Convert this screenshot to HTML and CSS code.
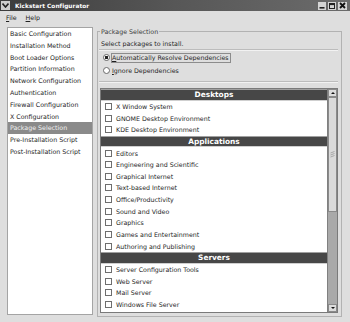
FILE: index.html
```html
<!DOCTYPE html>
<html lang="en">
<head>
  <meta charset="UTF-8" />
  <title>Kickstart Configurator</title>
  <link rel="stylesheet" href="styles.css">
</head>
<body>
  <div class="window">
    <div class="titlebar">
      <span class="tb-menu">
        <svg width="7" height="5" viewBox="0 0 7 5"><path d="M0.5 0.5 L3.5 4 L6.5 0.5" fill="none" stroke="#222" stroke-width="1.6"/></svg>
      </span>
      <span class="title">Kickstart Configurator</span>
      <span class="tb-btns">
        <span class="tb-btn"><svg width="6" height="6" viewBox="0 0 6 6"><rect x="0.5" y="4" width="5" height="1.6" fill="#222"/></svg></span>
        <span class="tb-btn"><svg width="6" height="6" viewBox="0 0 6 6"><rect x="0.5" y="0.5" width="5" height="5" fill="none" stroke="#222" stroke-width="1"/><rect x="0.5" y="0.5" width="5" height="1.6" fill="#222"/></svg></span>
        <span class="tb-btn close"><svg width="7" height="7" viewBox="0 0 7 7"><path d="M1 1 L6 6 M6 1 L1 6" stroke="#111" stroke-width="1.8"/></svg></span>
      </span>
    </div>

    <div class="menubar">
      <span><u>F</u>ile</span>
      <span><u>H</u>elp</span>
    </div>

    <div class="main">
      <ul class="sidebar">
        <li>Basic Configuration</li>
        <li>Installation Method</li>
        <li>Boot Loader Options</li>
        <li>Partition Information</li>
        <li>Network Configuration</li>
        <li>Authentication</li>
        <li>Firewall Configuration</li>
        <li>X Configuration</li>
        <li class="active">Package Selection</li>
        <li>Pre-Installation Script</li>
        <li>Post-Installation Script</li>
      </ul>

      <fieldset class="frame">
        <legend>Package Selection</legend>
        <div class="intro">Select packages to install.</div>
        <div class="sep"></div>
        <div class="radio on"><span class="dot"></span><span class="focus"><u>A</u>utomatically Resolve Dependencies</span></div>
        <div class="radio"><span class="dot"></span><span class="plain"><u>I</u>gnore Dependencies</span></div>
        <div class="sep lower"></div>

        <div class="pkgbox">
          <div class="pkglist" id="pkgList">
            <!-- rows are added by the script below -->
          </div>
          <div class="scrollbar">
            <div class="sb-btn"><span class="arrow up"></span></div>
            <div class="sb-thumb">
              <svg width="5" height="7" viewBox="0 0 5 7"><path d="M0.5 2 L4.5 0.5 M0.5 4 L4.5 2.5 M0.5 6 L4.5 4.5" stroke="#9a9a9a" stroke-width="0.8"/></svg>
            </div>
            <div class="sb-trough"></div>
            <div class="sb-btn"><span class="arrow down"></span></div>
          </div>
        </div>
      </fieldset>
    </div>
  </div>

<script>
  // package groups shown in the list (last entry is scrolled just out of view)
  const groups = [
    {name: "Desktops", items: ["X Window System", "GNOME Desktop Environment", "KDE Desktop Environment"]},
    {name: "Applications", items: ["Editors", "Engineering and Scientific", "Graphical Internet",
      "Text-based Internet", "Office/Productivity", "Sound and Video", "Graphics",
      "Games and Entertainment", "Authoring and Publishing"]},
    {name: "Servers", items: ["Server Configuration Tools", "Web Server", "Mail Server",
      "Windows File Server", ""]}
  ];

  const list = document.getElementById('pkgList');
  groups.forEach(group => {
    const head = document.createElement('div');
    head.className = 'row head';
    head.textContent = group.name;
    list.appendChild(head);

    group.items.forEach(item => {
      const row = document.createElement('div');
      row.className = 'row';
      row.innerHTML = '<span class="box"></span><span></span>';
      row.lastChild.textContent = item;
      list.appendChild(row);
    });
  });
</script>
</body>
</html>
```

FILE: styles.css
```css
body {
  margin: 0;
  background: #dedede;
  font-family: "DejaVu Sans", sans-serif;
  font-size: 6.3px;
  color: #1e1e1e;
}
.window {
  width: 350px;
  height: 322px;
  overflow: hidden;
  display: flex;
  flex-direction: column;
  background: #dedede;
}
.titlebar {
  height: 11px;
  display: flex;
  align-items: center;
  background: linear-gradient(to right, #3c3c3c, #575757 50%, #6b6b6b);
  color: #fff;
}
.tb-menu {
  width: 9px;
  height: 9px;
  margin: 0 5px 0 1px;
  background: #cdcdcd;
  display: flex;
  align-items: center;
  justify-content: center;
}
.title {
  flex: 1;
  font-weight: bold;
  font-size: 5.8px;
  letter-spacing: 0.05px;
}
.tb-btns {
  display: flex;
  gap: 2px;
  margin-right: 3px;
}
.tb-btn {
  width: 8px;
  height: 8px;
  background: #d4d4d4;
  display: flex;
  align-items: center;
  justify-content: center;
}
.tb-btn.close {
  width: 9px;
}
.menubar {
  height: 13px;
  display: flex;
  align-items: center;
  gap: 9px;
  padding-left: 6px;
  color: #222;
}
.main {
  flex: 1;
  display: flex;
  align-items: flex-start;
  gap: 4px;
  padding: 3px 8px 5px 7px;
  min-height: 0;
}
.sidebar {
  width: 86px;
  height: 288px;
  box-sizing: border-box;
  margin: 0;
  padding: 0;
  list-style: none;
  background: #fff;
  border: 1px solid #a4a4a4;
}
.sidebar li {
  height: 11.8px;
  line-height: 11.8px;
  padding-left: 2px;
  white-space: nowrap;
}
.sidebar li.active {
  background: #8a8a8a;
  color: #f2f2f2;
}
.frame {
  flex: 1;
  min-width: 0;
  height: 290px;
  box-sizing: border-box;
  margin: 0;
  padding: 3px 3px 3px 1px;
  border: 1px solid #b2b2b2;
  display: flex;
  flex-direction: column;
}
.frame legend {
  margin-left: 1px;
  padding: 0 1px;
  line-height: 9px;
  color: #3a3a3a;
}
.intro {
  line-height: 10px;
  padding-left: 2px;
}
.sep {
  height: 1px;
  background: #bcbcbc;
  border-bottom: 1px solid #f2f2f2;
}
.sep.lower {
  margin-top: 4px;
}
.radio {
  height: 13px;
  display: flex;
  align-items: center;
  padding-left: 4px;
}
.dot {
  width: 7px;
  height: 7px;
  box-sizing: border-box;
  border: 1px solid #6a6a6a;
  border-radius: 50%;
  background: #fff;
  margin-right: 1px;
}
.radio.on .dot {
  background: radial-gradient(circle, #222 0 1.4px, #fff 1.9px);
}
.focus {
  border: 1px solid #8c8c8c;
  line-height: 8px;
  padding-right: 1px;
}
.plain {
  padding-left: 1px;
}
.pkgbox {
  flex: 1;
  min-height: 0;
  margin: 5px 0 0 1px;
  display: flex;
  background: #fff;
  border: 1px solid #7a7a7a;
}
.pkglist {
  flex: 1;
  overflow: hidden;
}
.row {
  height: 11.65px;
  display: flex;
  align-items: center;
  padding-left: 4px;
  white-space: nowrap;
}
.box {
  width: 7px;
  height: 7px;
  box-sizing: border-box;
  border: 1px solid #6e6e6e;
  background: #fff;
  margin-right: 4px;
  flex: none;
}
.row.head {
  box-sizing: border-box;
  justify-content: center;
  padding-left: 0;
  background: #474747;
  border-top: 1px solid #a0a0a0;
  border-bottom: 1px solid #cfcfcf;
  color: #fff;
  font-weight: bold;
  font-size: 7.4px;
}
.scrollbar {
  width: 9px;
  display: flex;
  flex-direction: column;
  background: #a9a9a9;
  border-left: 1px solid #808080;
}
.sb-btn {
  height: 8px;
  box-sizing: border-box;
  background: #dcdcdc;
  border: 1px solid #8a8a8a;
  display: flex;
  align-items: center;
  justify-content: center;
}
.arrow {
  width: 0;
  height: 0;
  border-left: 2px solid transparent;
  border-right: 2px solid transparent;
}
.arrow.up {
  border-bottom: 2px solid #111;
}
.arrow.down {
  border-top: 2px solid #111;
}
.sb-thumb {
  height: 115px;
  box-sizing: border-box;
  background: #dadada;
  border: 1px solid #8a8a8a;
  display: flex;
  align-items: center;
  justify-content: center;
}
.sb-trough {
  flex: 1;
}
```
